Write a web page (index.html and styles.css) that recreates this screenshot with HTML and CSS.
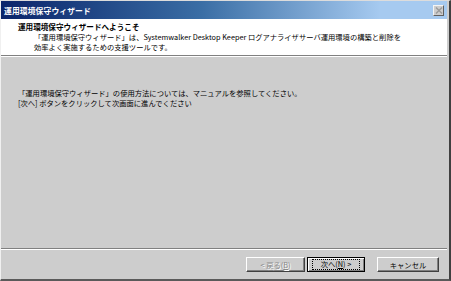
FILE: index.html
```html
<!DOCTYPE html>
<html lang="ja">
<head>
    <meta charset="UTF-8">
    <title>運用環境保守ウィザード</title>
    <link rel="stylesheet" href="styles.css">
</head>
<body>
    <div class="window">
        <div class="titlebar">
            <span class="title-text">運用環境保守ウィザード</span>
            <span class="close-btn">
                <svg width="8" height="7" viewBox="0 0 8 7">
                    <path d="M1 0.5 L7 6.5 M7 0.5 L1 6.5" stroke="#9a9a9a" stroke-width="1.4"/>
                </svg>
            </span>
        </div>

        <div class="header">
            <div class="header-title">運用環境保守ウィザードへようこそ</div>
            <div class="header-desc">
                「運用環境保守ウィザード」は、Systemwalker Desktop Keeper ログアナライザサーバ運用環境の構築と削除を<br>
                効率よく実施するための支援ツールです。
            </div>
        </div>
        <div class="sep"></div>

        <div class="content">
            <p>「運用環境保守ウィザード」の使用方法については、マニュアルを参照してください。</p>
            <p>[次へ] ボタンをクリックして次画面に進んでください</p>
        </div>

        <div class="sep bottom-sep"></div>
        <div class="buttons">
            <div class="btn disabled">&lt; 戻る(<u>B</u>)</div>
            <div class="btn default"><span class="focus">次へ(<u>N</u>) &gt;</span></div>
            <div class="btn cancel">キャンセル</div>
        </div>
    </div>
</body>
</html>
```

FILE: styles.css
```css
* {
    box-sizing: border-box;
    margin: 0;
    padding: 0;
}

body {
    width: 451px;
    height: 281px;
    overflow: hidden;
    background-color: #cdcdcd;
    font-family: "Noto Sans CJK JP", "DejaVu Sans", sans-serif;
    font-size: 7.3px;
    color: #000;
}

.window {
    width: 451px;
    height: 281px;
    display: flex;
    flex-direction: column;
    background-color: #cdcdcd;
    border-top: 1px solid #dcdcdc;
    border-left: 1px solid #f0f0f0;
    border-right: 2px solid #404040;
    border-bottom: 2px solid #5a5a5a;
    padding-right: 2px;
}

.titlebar {
    height: 18px;
    display: flex;
    align-items: center;
    justify-content: space-between;
    padding: 0 3px 0 3px;
    background: linear-gradient(to right, #0a246a 0%, #3a6ea5 45%, #a6caf0 85%, #a6caf0 100%);
}

.title-text {
    color: #fff;
    font-weight: bold;
    font-size: 7.8px;
    letter-spacing: 0.1px;
}

.close-btn {
    width: 11px;
    height: 11px;
    display: flex;
    align-items: center;
    justify-content: center;
    background-color: #cdcdcd;
    border: 1px solid;
    border-color: #f4f4f4 #606060 #606060 #f4f4f4;
}

.header {
    height: 36px;
    background-color: #fff;
    padding: 3px 0 0 17px;
}

.header-title {
    font-weight: bold;
    font-size: 7.6px;
    line-height: 10px;
}

.header-desc {
    padding-left: 16px;
    line-height: 9.5px;
    margin-top: 1px;
}

.sep {
    height: 2px;
    border-top: 1px solid #808080;
    border-bottom: 1px solid #fff;
}

.content {
    flex-grow: 1;
    padding: 32px 0 0 17px;
    line-height: 9.5px;
}

.bottom-sep {
    margin-bottom: 6px;
}

.buttons {
    height: 23px;
    display: flex;
    justify-content: flex-end;
    align-items: flex-start;
    padding-right: 8px;
    padding-top: 1px;
}

.btn {
    width: 59px;
    height: 15px;
    display: flex;
    align-items: center;
    justify-content: center;
    background-color: #cdcdcd;
    border: 1px solid;
    border-color: #fff #404040 #404040 #fff;
    box-shadow: inset -1px -1px 0 #808080;
}

.btn u {
    text-decoration: underline;
}

.disabled {
    color: #8a8a8a;
    text-shadow: 1px 1px 0 #fff;
}

.default {
    width: 58px;
    margin-left: 2px;
    border: 1px solid #000;
    box-shadow: inset 1px 1px 0 #fff, inset -1px -1px 0 #808080;
}

.focus {
    border: 1px dotted #000;
    padding: 0 6px;
    line-height: 9px;
    width: 48px;
    text-align: center;
}

.cancel {
    width: 62px;
    margin-left: 12px;
}
```
